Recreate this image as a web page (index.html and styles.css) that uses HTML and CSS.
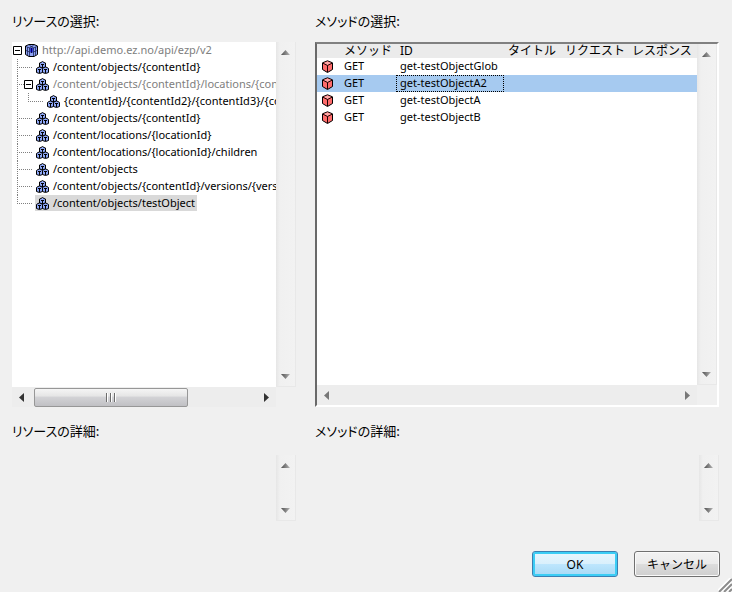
FILE: index.html
```html
<!DOCTYPE html>
<html lang="ja">
<head>
  <meta charset="UTF-8" />
  <meta name="viewport" content="width=device-width, initial-scale=1.0" />
  <title>リソースとメソッドの選択</title>
  <link rel="stylesheet" href="styles.css">
</head>
<body>
  <svg class="sprites" aria-hidden="true">
    <symbol id="minus" viewBox="0 0 9 9">
      <path d="M.5 .5h8v8h-8z" fill="#fff" stroke="#000" />
      <path d="M2 4.5h5" stroke="#000" />
    </symbol>
    <symbol id="root" viewBox="0 0 13 13">
      <path d="M4 .5h5l3.500 1.500v8.500l-3.500 2h-5l-3.500-2v-8.500z" fill="#8fa4f5" stroke="#000" />
      <path d="M1 2.500l3.500 1.500h4l3.500-1.500M4.500 4v8M8.500 4v8M1 6.500l3.500 1.500h4l3.500-1.500M4.500 1.500l4 2M8.500 1.500l-4 2M2.500 3v8M10.500 3v8" fill="none" stroke="#1c2658" stroke-width=".8" />
      <path d="M5 4h3v4H5z" fill="#3038e0" />
      <path d="M6 4h1v5H6z" fill="#000060" />
    </symbol>
    <symbol id="cubes" viewBox="0 0 13 13">
      <g fill="#8fa8f8" stroke="#000">
        <path d="M5 1.500l1.500-1 1.500 1 1.500 .5v4l-3 1-3-1v-4z" />
        <path d="M2 6.500l1.500-.5 1.500 .5 1.500 1v4l-3 1-3-1v-4z" />
        <path d="M8 6.500l1.500-.5 1.500 .5 1.500 1v4l-3 1-3-1v-4z" />
      </g>
      <path d="M5 3h3v1H7v3H6V4H5zM2 8h3v1H4v3H3V9H2zM8 8h3v1h-1v3H9V9H8z" fill="#000" />
    </symbol>
    <symbol id="cube" viewBox="0 0 13 13">
      <path d="M6.500 .8l5 2v6.700l-5 3-5-3v-6.700z" fill="#ff6b6b" stroke="#000" />
      <path d="M6.500 1.500l4 1.700-4 1.800-4-1.800z" fill="#ffa8a8" />
      <path d="M2 3.200l4.500 2.300 4.500-2.300M6.500 5.500v6.500" fill="none" stroke="#1c0000" />
    </symbol>
    <linearGradient id="shade" x1="0" y1="0" x2="1" y2="0">
      <stop offset="0" stop-color="#505050" /><stop offset="1" stop-color="#b4b4b4" />
    </linearGradient>
    <symbol id="up" viewBox="0 0 9 5"><path d="M0 5l4.500-5 4.500 5z" fill="url(#shade)" /></symbol>
    <symbol id="down" viewBox="0 0 9 5"><path d="M0 0l4.500 5 4.500-5z" fill="url(#shade)" /></symbol>
    <symbol id="left" viewBox="0 0 5 9"><path d="M5 0v9l-5-4.500z" fill="currentColor" /></symbol>
    <symbol id="right" viewBox="0 0 5 9"><path d="M0 0v9l5-4.500z" fill="currentColor" /></symbol>
  </svg>

  <form class="dialog">
    <div class="columns">
      <section class="column">
        <h2 id="resources-label">リソースの選択:</h2>
        <div class="pane">
          <div class="view">
            <ul class="tree" role="tree" aria-labelledby="resources-label">
              <li>
                <div class="row">
                  <button type="button" class="toggle" aria-label="折りたたむ"><svg><use href="#minus" /></svg></button>
                  <span class="node muted"><svg class="icon"><use href="#root" /></svg>http://api.demo.ez.no/api/ezp/v2</span>
                </div>
                <ul class="branch">
                  <li><div class="row"><span class="node"><svg class="icon"><use href="#cubes" /></svg>/content/objects/{contentId}</span></div></li>
                  <li>
                    <div class="row open">
                      <button type="button" class="toggle" aria-label="折りたたむ"><svg><use href="#minus" /></svg></button>
                      <span class="node muted"><svg class="icon"><use href="#cubes" /></svg>/content/objects/{contentId}/locations/{con</span>
                    </div>
                    <ul class="branch nested">
                      <li><div class="row"><span class="node"><svg class="icon"><use href="#cubes" /></svg>{contentId}/{contentId2}/{contentId3}/{con</span></div></li>
                    </ul>
                  </li>
                  <li><div class="row"><span class="node"><svg class="icon"><use href="#cubes" /></svg>/content/objects/{contentId}</span></div></li>
                  <li><div class="row"><span class="node"><svg class="icon"><use href="#cubes" /></svg>/content/locations/{locationId}</span></div></li>
                  <li><div class="row"><span class="node"><svg class="icon"><use href="#cubes" /></svg>/content/locations/{locationId}/children</span></div></li>
                  <li><div class="row"><span class="node"><svg class="icon"><use href="#cubes" /></svg>/content/objects</span></div></li>
                  <li><div class="row"><span class="node"><svg class="icon"><use href="#cubes" /></svg>/content/objects/{contentId}/versions/{versi</span></div></li>
                  <li><div class="row"><span class="node selected"><svg class="icon"><use href="#cubes" /></svg>/content/objects/testObject</span></div></li>
                </ul>
              </li>
            </ul>
          </div>
          <div class="vbar">
            <button type="button" aria-label="上へ"><svg><use href="#up" /></svg></button>
            <button type="button" aria-label="下へ"><svg><use href="#down" /></svg></button>
          </div>
          <div class="hbar active">
            <button type="button" aria-label="左へ"><svg><use href="#left" /></svg></button>
            <div class="rail"><div class="thumb"><i></i><i></i><i></i></div></div>
            <button type="button" aria-label="右へ"><svg><use href="#right" /></svg></button>
          </div>
        </div>
      </section>

      <section class="column">
        <h2 id="methods-label">メソッドの選択:</h2>
        <div class="pane sunken">
          <div class="view">
            <table class="methods" aria-labelledby="methods-label">
              <thead>
                <tr>
                  <th class="col-icon"></th>
                  <th class="col-method">メソッド</th>
                  <th class="col-id">ID</th>
                  <th class="col-title">タイトル</th>
                  <th class="col-request">リクエスト</th>
                  <th>レスポンス</th>
                </tr>
              </thead>
              <tbody>
                <tr><td><svg class="icon"><use href="#cube" /></svg></td><td>GET</td><td>get-testObjectGlob</td><td></td><td></td><td></td></tr>
                <tr class="current"><td><svg class="icon"><use href="#cube" /></svg></td><td>GET</td><td class="focus">get-testObjectA2</td><td></td><td></td><td></td></tr>
                <tr><td><svg class="icon"><use href="#cube" /></svg></td><td>GET</td><td>get-testObjectA</td><td></td><td></td><td></td></tr>
                <tr><td><svg class="icon"><use href="#cube" /></svg></td><td>GET</td><td>get-testObjectB</td><td></td><td></td><td></td></tr>
              </tbody>
            </table>
          </div>
          <div class="vbar">
            <button type="button" aria-label="上へ"><svg><use href="#up" /></svg></button>
            <button type="button" aria-label="下へ"><svg><use href="#down" /></svg></button>
          </div>
          <div class="hbar">
            <button type="button" aria-label="左へ"><svg><use href="#left" /></svg></button>
            <button type="button" aria-label="右へ"><svg><use href="#right" /></svg></button>
          </div>
        </div>
      </section>
    </div>

    <div class="columns details">
      <div class="column">
        <label for="resource-detail">リソースの詳細:</label>
        <div class="memo">
          <textarea id="resource-detail" readonly></textarea>
          <div class="vbar">
            <button type="button" aria-label="上へ"><svg><use href="#up" /></svg></button>
            <button type="button" aria-label="下へ"><svg><use href="#down" /></svg></button>
          </div>
        </div>
      </div>
      <div class="column">
        <label for="method-detail">メソッドの詳細:</label>
        <div class="memo">
          <textarea id="method-detail" readonly></textarea>
          <div class="vbar">
            <button type="button" aria-label="上へ"><svg><use href="#up" /></svg></button>
            <button type="button" aria-label="下へ"><svg><use href="#down" /></svg></button>
          </div>
        </div>
      </div>
    </div>

    <div class="actions">
      <button type="submit" class="btn primary">OK</button>
      <button type="button" class="btn">キャンセル</button>
    </div>
  </form>

  <svg class="grip" viewBox="0 0 14 14" aria-hidden="true">
    <path d="M0 14L14 0M5 14l9-9M10 14l4-4" stroke="#fff" stroke-width="4" />
    <path d="M1 14L14 1M6 14l8-8M11 14l3-3" stroke="#8c8c8c" stroke-width="2" />
  </svg>
</body>
</html>
```
FILE: styles.css
```css
* {
  margin: 0;
  padding: 0;
  box-sizing: border-box;
}
body {
  background-color: #f0f0f0;
  color: #000;
  font-family: 'Noto Sans', 'Noto Sans CJK JP', sans-serif;
  font-size: 11px;
  line-height: 15px;
}
.sprites {
  display: block;
  width: 0;
  height: 0;
}
.dialog {
  min-height: 100vh;
  padding: 12px 13px 15px 12px;
  display: flex;
  flex-direction: column;
}
.columns {
  display: grid;
  grid-template-columns: 284fr 404fr;
  gap: 19px;
  flex: 1;
}
.details {
  flex: none;
  margin-top: 15px;
}
.column {
  display: flex;
  flex-direction: column;
  gap: 12px;
  min-width: 0;
}
.details .column {
  gap: 15px;
}
h2,
label {
  display: block;
  font-family: 'Noto Sans CJK JP', sans-serif;
  font-size: 13px;
  font-weight: normal;
  font-feature-settings: 'palt';
  line-height: 18px;
}

/* list panes with their scrollbars */
.pane {
  flex: 1;
  display: grid;
  grid-template-columns: minmax(0, 1fr) 20px;
  grid-template-rows: 1fr 20px;
}
.sunken {
  border: 2px solid;
  border-color: #808080 #fff #fff #696969;
}
.view {
  background: #fff;
  overflow: hidden;
}
.vbar,
.hbar {
  display: flex;
  justify-content: space-between;
  background: #ededed;
}
.vbar {
  flex-direction: column;
  width: 20px;
  background: linear-gradient(90deg, #e6e6e6, #f0f0f0 20%, #f2f2f2);
  border-right: 1px solid #e8e8e8;
  border-bottom: 1px solid #e8e8e8;
}
.vbar button,
.hbar button {
  width: 19px;
  height: 20px;
  border: none;
  background: none;
  display: flex;
  align-items: center;
  justify-content: center;
  color: #777;
}
.vbar svg {
  width: 9px;
  height: 5px;
}
.hbar svg {
  width: 5px;
  height: 9px;
}
.hbar.active button {
  color: #333;
}
.rail {
  flex: 1;
  padding: 1px 3px 0;
}
.thumb {
  width: 70%;
  height: 19px;
  border: 1px solid #979797;
  border-radius: 2px;
  background: linear-gradient(#f5f5f5, #e6e6e6 40%, #d2d2d5 50%, #c0c0c4);
  display: flex;
  align-items: center;
  justify-content: center;
  gap: 2px;
}
.thumb i {
  width: 2px;
  height: 9px;
  background: linear-gradient(90deg, #6c6c6c 50%, #fff 50%);
}

/* resource tree */
ul {
  list-style: none;
}
.row {
  height: 17px;
  display: flex;
  align-items: flex-start;
  white-space: nowrap;
}
.tree > li > .row {
  padding-left: 1px;
}
.branch {
  margin-left: 5px;
}
.nested {
  margin-left: 11px;
}
.branch > li {
  background-image:
    repeating-linear-gradient(#808080 0 1px, transparent 1px 2px),
    repeating-linear-gradient(90deg, #808080 0 1px, transparent 1px 2px);
  background-size: 1px 100%, 16px 1px;
  background-position: 0 0, 0 8px;
  background-repeat: no-repeat;
}
.branch > li:last-child {
  background-size: 1px 9px, 16px 1px;
}
.branch .row {
  padding-left: 18px;
}
.branch .open {
  padding-left: 7px;
}
.toggle {
  width: 9px;
  height: 9px;
  margin: 4px 2px 0 0;
  border: none;
  background: none;
}
.toggle svg {
  display: block;
  width: 9px;
  height: 9px;
}
.node {
  display: flex;
  gap: 4px;
  padding: 0 2px 1px 1px;
}
.icon {
  flex: none;
  display: block;
  width: 13px;
  height: 13px;
}
.node .icon {
  margin-top: 2px;
}
.muted {
  color: #808080;
}
.selected {
  background: #d9d9d9;
}

/* method table */
.methods {
  width: 100%;
  table-layout: fixed;
  border-collapse: collapse;
}
th {
  background: #ebebeb;
  font-size: 12px;
  font-weight: normal;
  line-height: 14px;
  text-align: left;
  white-space: nowrap;
}
th,
td {
  padding: 0 4px;
}
td {
  height: 17px;
  vertical-align: top;
}
td .icon {
  margin-top: 2px;
}
.col-icon { width: 23px; }
.col-method { width: 56px; }
.col-id { width: 108px; }
.col-title { width: 57px; }
.col-request { width: 67px; }
.current {
  background: #a6caf0;
}
.focus {
  outline: 1px dotted #000;
  outline-offset: -1px;
}

/* detail boxes */
.memo {
  height: 66px;
  display: flex;
}
.memo textarea {
  flex: 1;
  min-width: 0;
  border: none;
  outline: none;
  resize: none;
  background: none;
  font: inherit;
}

.actions {
  display: flex;
  justify-content: flex-end;
  gap: 16px;
  margin: 30px -1px 0 0;
}
.btn {
  width: 86px;
  height: 26px;
  border: 1px solid #707070;
  border-radius: 3px;
  background: linear-gradient(#f2f2f2, #ebebeb 50%, #dddddd 50%, #cfcfcf);
  box-shadow: inset 0 0 0 1px #fafafa;
  font-family: 'Noto Sans', 'Noto Sans CJK JP', sans-serif;
  font-size: 12px;
}
.primary {
  border-color: #3c7fb1;
  background: linear-gradient(#eaf6fd, #d9f0fc 50%, #bee6fd 50%, #a7d9f5);
  box-shadow: inset 0 0 0 2px #3ccdf5;
}
.grip {
  position: fixed;
  right: 0;
  bottom: 0;
  width: 14px;
  height: 14px;
}
```
